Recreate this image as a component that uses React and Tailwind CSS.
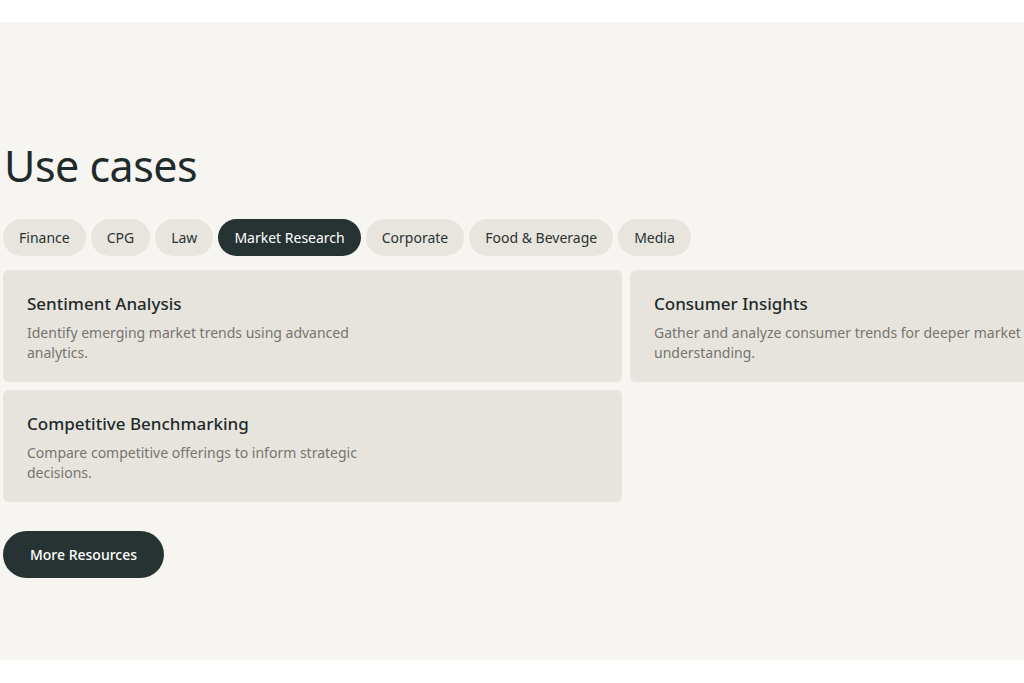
export default function App() {
  const tabs = ["Finance", "CPG", "Law", "Market Research", "Corporate", "Food & Beverage", "Media"];
  const cards = [
    { title: "Sentiment Analysis", desc: "Identify emerging market trends using advanced analytics." },
    { title: "Consumer Insights", desc: "Gather and analyze consumer trends for deeper market understanding." },
    { title: "Competitive Benchmarking", desc: "Compare competitive offerings to inform strategic decisions." },
  ];
  return (
    <div className="w-[1024px] h-[683px] bg-white overflow-hidden font-['Inter',sans-serif]">
      <div className="mt-[22px] h-[638px] bg-[#f6f5f1] pl-[3px] pt-[118px] overflow-hidden">
        <h1 className="text-[43px] leading-[52px] tracking-[-0.5px] text-[#1f2b2b] pl-[1px]">Use cases</h1>
        <div className="flex gap-[5px] mt-[27px]">
          {tabs.map((t) => (
            <div
              key={t}
              className={`h-[37px] flex items-center px-4 rounded-full text-[14px] ${
                t === "Market Research" ? "bg-[#263332] text-white" : "bg-[#e8e5df] text-[#2b3332]"
              }`}
            >
              {t}
            </div>
          ))}
        </div>
        <div className="grid grid-cols-[619px_619px] gap-x-[8px] gap-y-[8px] mt-[14px] w-[1300px]">
          {cards.map((c) => (
            <div key={c.title} className="h-[112px] bg-[#e7e4de] rounded-[6px] px-6 pt-[21px]">
              <div className="text-[17px] text-[#1f2b2b] font-medium">{c.title}</div>
              <p className="mt-[6px] text-[14px] leading-[20px] text-[#77746f] w-[370px]">{c.desc}</p>
            </div>
          ))}
        </div>
        <button className="mt-[29px] h-[47px] w-[161px] rounded-full bg-[#263332] text-white text-[14px] font-medium">
          More Resources
        </button>
      </div>
    </div>
  );
}
